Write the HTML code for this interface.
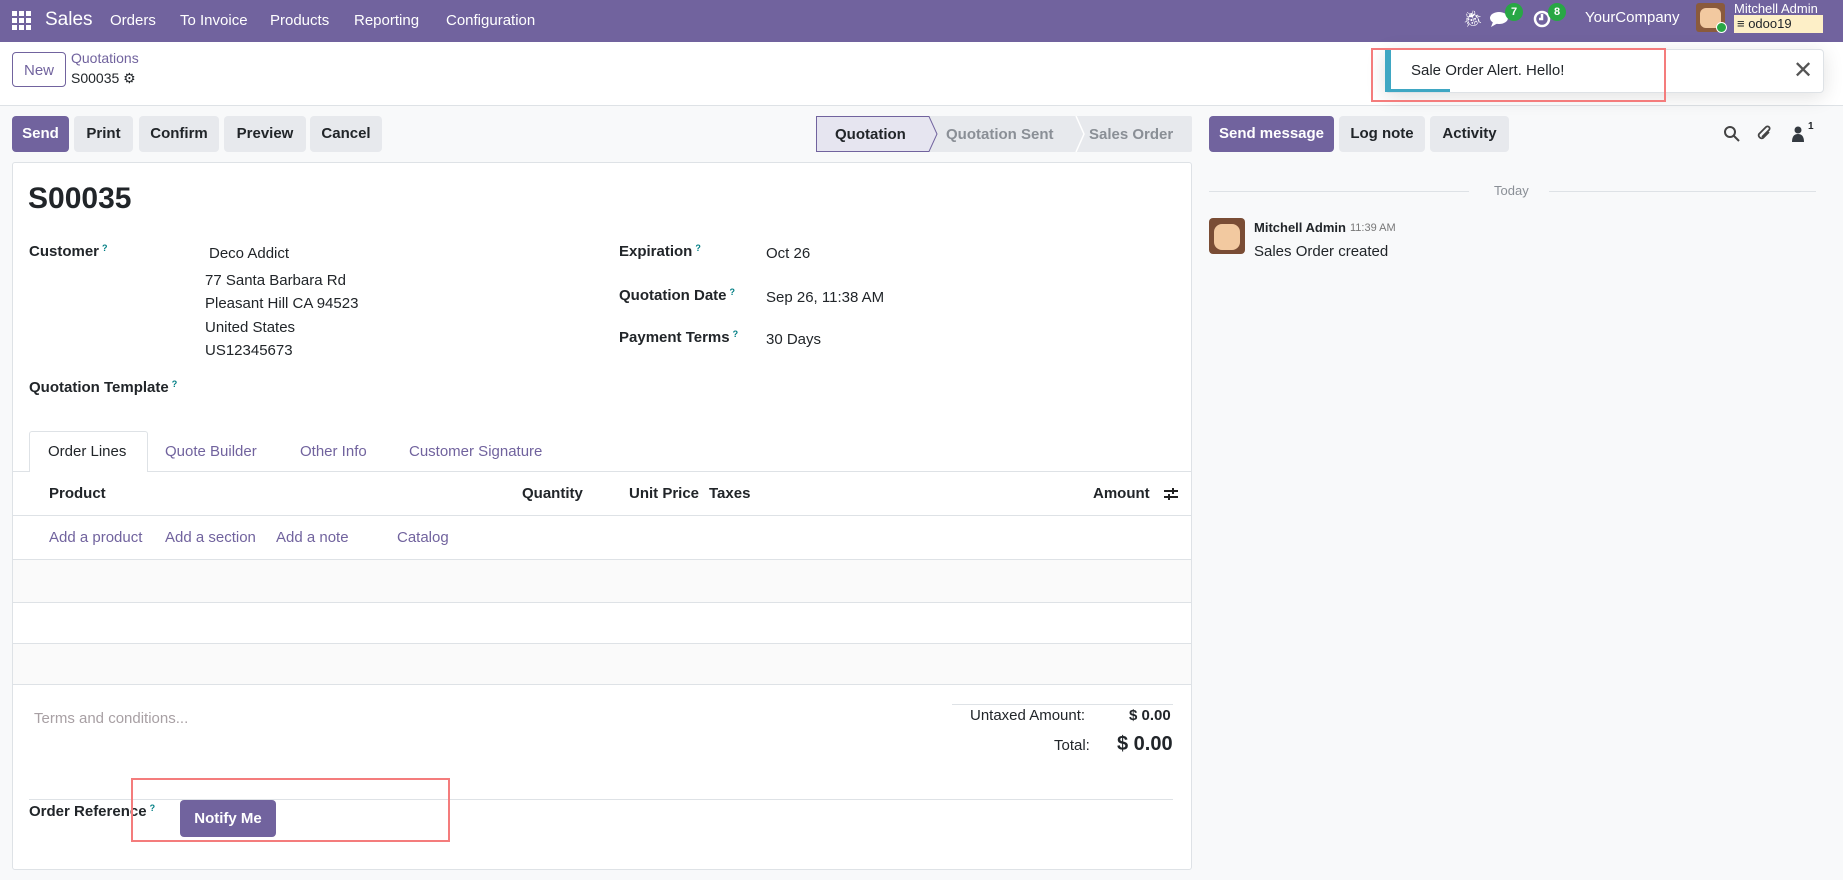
<!DOCTYPE html>
<html><head><meta charset="utf-8"><style>
*{box-sizing:border-box;margin:0;padding:0}
body{width:1843px;height:880px;overflow:hidden;background:#f8f9fa;font-family:"Liberation Sans",sans-serif;font-size:15px;color:#212529;position:relative}
.a{position:absolute;white-space:nowrap}
.nav{position:absolute;left:0;top:0;width:1843px;height:42px;background:#71639e;color:#fff}
.nav .a{font-size:15px;top:12px;color:#fff}
.cp{position:absolute;left:0;top:42px;width:1843px;height:64px;background:#fff;border-bottom:1px solid #dee2e6}
.btn{position:absolute;height:36px;line-height:36px;text-align:center;border-radius:4px;font-weight:bold;font-size:15px;background:#e7e9ed;color:#212529}
.pri{background:#71639e;color:#fff}
.sheet{position:absolute;left:12px;top:162px;width:1180px;height:708px;background:#fff;border:1px solid #dee2e6;border-radius:3px}
.lbl{font-weight:bold}
.q{color:#017e84;font-size:9px;vertical-align:top;font-weight:bold;margin-left:3px}
.lnk{color:#71639e}
.badge{position:absolute;width:18px;height:18px;border-radius:9px;background:#28a745;color:#fff;font-size:11px;font-weight:bold;text-align:center;line-height:18px}
</style></head><body>
<div class="nav">
 <svg class="a" style="left:12px;top:11px" width="20" height="20" viewBox="0 0 20 20" fill="#fff"><rect x="0" y="0" width="5" height="5"/><rect x="7" y="0" width="5" height="5"/><rect x="14" y="0" width="5" height="5"/><rect x="0" y="7" width="5" height="5"/><rect x="7" y="7" width="5" height="5"/><rect x="14" y="7" width="5" height="5"/><rect x="0" y="14" width="5" height="5"/><rect x="7" y="14" width="5" height="5"/><rect x="14" y="14" width="5" height="5"/></svg>
 <span class="a" style="left:45px;top:9px;font-size:19px">Sales</span>
 <span class="a" style="left:110px">Orders</span>
 <span class="a" style="left:180px">To Invoice</span>
 <span class="a" style="left:270px">Products</span>
 <span class="a" style="left:354px">Reporting</span>
 <span class="a" style="left:446px">Configuration</span>
 <span class="a" style="left:1463px;top:9px;font-size:16px">🐞︎</span>
 <svg class="a" style="left:1490px;top:10px" width="22" height="20" viewBox="0 0 22 20" fill="#fff"><ellipse cx="9" cy="8" rx="9" ry="6"/><path d="M3 12 L1 17 L8 13Z"/></svg>
 <div class="badge" style="left:1505px;top:3px">7</div>
 <svg class="a" style="left:1532px;top:9px" width="20" height="20" viewBox="0 0 20 20" fill="none" stroke="#fff" stroke-width="2.5"><circle cx="10" cy="10" r="7"/><path d="M10 5v5h-3"/></svg>
 <div class="badge" style="left:1548px;top:3px">8</div>
 <span class="a" style="left:1585px;top:9px;font-size:15px">YourCompany</span>
 <div class="a" style="left:1696px;top:3px;width:29px;height:29px;background:#8a5a3c;border-radius:3px"></div>
 <div class="a" style="left:1700px;top:8px;width:21px;height:20px;background:#f2c9a0;border-radius:6px"></div>
 <div class="a" style="left:1716px;top:22px;width:11px;height:11px;background:#28a745;border-radius:6px;border:1px solid #fff"></div>
 <span class="a" style="left:1734px;top:1px;font-size:13px">Mitchell Admin</span>
 <div class="a" style="left:1734px;top:15px;width:89px;height:18px;background:#fdefc7;color:#212529;font-size:13px;padding-left:3px;line-height:18px">≡ odoo19</div>
</div>
<div class="cp">
 <div class="btn" style="left:12px;top:10px;width:54px;height:35px;background:#fff;border:1px solid #71639e;color:#71639e;font-weight:normal">New</div>
 <span class="a lnk" style="left:71px;top:8px;font-size:14px">Quotations</span>
 <span class="a" style="left:71px;top:28px;font-size:14px">S00035 ⚙</span>
</div>
<div class="a" style="left:1385px;top:49px;width:439px;height:44px;background:#fff;border:1px solid #dee2e6;border-radius:4px;box-shadow:0 4px 20px rgba(0,0,0,.12)"></div>
<div class="a" style="left:1385px;top:49px;width:6px;height:43px;background:#3fa7c3"></div>
<div class="a" style="left:1385px;top:89px;width:65px;height:3px;background:#3fa7c3"></div>
<span class="a" style="left:1411px;top:62px;font-size:15px">Sale Order Alert. Hello!</span>
<span class="a" style="left:1793px;top:56px;font-size:24px;color:#555">✕</span>
<div class="a" style="left:1371px;top:48px;width:295px;height:54px;border:2px solid #f47c7c"></div>

<div class="btn pri" style="left:12px;top:116px;width:57px">Send</div>
<div class="btn" style="left:74px;top:116px;width:59px">Print</div>
<div class="btn" style="left:139px;top:116px;width:80px">Confirm</div>
<div class="btn" style="left:224px;top:116px;width:82px">Preview</div>
<div class="btn" style="left:310px;top:116px;width:72px">Cancel</div>
<svg class="a" style="left:816px;top:116px" width="376" height="36" viewBox="0 0 376 36">
 <rect x="0" y="0" width="376" height="36" rx="2" fill="#e7e9ed"/>
 <path d="M0.5 0.5 H113 L121 18 L113 35.5 H0.5Z" fill="#e6e5f0" stroke="#71639e"/>
 <path d="M260 0 L268 18 L260 36" fill="none" stroke="#fff" stroke-width="1.5"/>
 <text x="19" y="23" font-family="Liberation Sans" font-size="15" font-weight="bold" fill="#212529">Quotation</text>
 <text x="130" y="23" font-family="Liberation Sans" font-size="15" font-weight="bold" fill="#8a8f96">Quotation Sent</text>
 <text x="273" y="23" font-family="Liberation Sans" font-size="15" font-weight="bold" fill="#8a8f96">Sales Order</text>
</svg>

<div class="btn pri" style="left:1209px;top:116px;width:125px">Send message</div>
<div class="btn" style="left:1339px;top:116px;width:86px">Log note</div>
<div class="btn" style="left:1430px;top:116px;width:79px">Activity</div>
<svg class="a" style="left:1723px;top:125px" width="18" height="18" viewBox="0 0 18 18" fill="none" stroke="#444" stroke-width="2"><circle cx="7" cy="7" r="5"/><path d="M11 11l5 5"/></svg>
<svg class="a" style="left:1756px;top:124px" width="18" height="20" viewBox="0 0 18 20" fill="none" stroke="#444" stroke-width="1.8"><path d="M13 8 L7 14 a3 3 0 0 1-4-4 L10 3 a2 2 0 0 1 3 3 L6 13"/></svg>
<svg class="a" style="left:1792px;top:126px" width="12" height="16" viewBox="0 0 12 16" fill="#343a40"><circle cx="6" cy="4" r="3.5"/><path d="M0 16 Q0 8 6 8 Q12 8 12 16Z"/></svg>
<span class="a" style="left:1808px;top:121px;font-size:10px;font-weight:bold">1</span>
<div class="a" style="left:1209px;top:191px;width:260px;border-top:1px solid #dee2e6"></div>
<span class="a" style="left:1494px;top:183px;font-size:13px;color:#8a8f96">Today</span>
<div class="a" style="left:1549px;top:191px;width:267px;border-top:1px solid #dee2e6"></div>
<div class="a" style="left:1209px;top:218px;width:36px;height:36px;background:#7a4d35;border-radius:4px"></div>
<div class="a" style="left:1214px;top:224px;width:26px;height:26px;background:#f2c9a0;border-radius:8px"></div>
<span class="a" style="left:1254px;top:220px;font-size:13px;font-weight:bold">Mitchell Admin</span>
<span class="a" style="left:1350px;top:222px;font-size:11px;color:#777">11:39 AM</span>
<span class="a" style="left:1254px;top:243px;font-size:15px">Sales Order created</span>

<div class="sheet"></div>
<span class="a" style="left:28px;top:182px;font-size:30px;font-weight:bold">S00035</span>
<span class="a lbl" style="left:29px;top:243px">Customer<span class="q">?</span></span>
<span class="a" style="left:209px;top:245px">Deco Addict</span>
<span class="a" style="left:205px;top:272px">77 Santa Barbara Rd</span>
<span class="a" style="left:205px;top:295px">Pleasant Hill CA 94523</span>
<span class="a" style="left:205px;top:319px">United States</span>
<span class="a" style="left:205px;top:342px">US12345673</span>
<span class="a lbl" style="left:29px;top:379px">Quotation Template<span class="q">?</span></span>
<span class="a lbl" style="left:619px;top:243px">Expiration<span class="q">?</span></span>
<span class="a" style="left:766px;top:245px">Oct 26</span>
<span class="a lbl" style="left:619px;top:287px">Quotation Date<span class="q">?</span></span>
<span class="a" style="left:766px;top:289px">Sep 26, 11:38 AM</span>
<span class="a lbl" style="left:619px;top:329px">Payment Terms<span class="q">?</span></span>
<span class="a" style="left:766px;top:331px">30 Days</span>

<div class="a" style="left:13px;top:471px;width:1178px;border-top:1px solid #dee2e6"></div>
<div class="a" style="left:29px;top:431px;width:119px;height:41px;background:#fff;border:1px solid #dee2e6;border-bottom:none;border-radius:3px 3px 0 0"></div>
<span class="a" style="left:48px;top:443px">Order Lines</span>
<span class="a lnk" style="left:165px;top:443px">Quote Builder</span>
<span class="a lnk" style="left:300px;top:443px">Other Info</span>
<span class="a lnk" style="left:409px;top:443px">Customer Signature</span>
<span class="a lbl" style="left:49px;top:485px">Product</span>
<span class="a lbl" style="left:522px;top:485px">Quantity</span>
<span class="a lbl" style="left:629px;top:485px">Unit Price</span>
<span class="a lbl" style="left:709px;top:485px">Taxes</span>
<span class="a lbl" style="left:1093px;top:485px">Amount</span>
<svg class="a" style="left:1163px;top:486px" width="16" height="16" viewBox="0 0 16 16" stroke="#222" stroke-width="2"><path d="M1 5h14M1 11h14"/><path d="M10 2v6M6 8v6"/></svg>
<div class="a" style="left:13px;top:515px;width:1178px;border-top:1px solid #dee2e6"></div>
<span class="a lnk" style="left:49px;top:529px">Add a product</span>
<span class="a lnk" style="left:165px;top:529px">Add a section</span>
<span class="a lnk" style="left:276px;top:529px">Add a note</span>
<span class="a lnk" style="left:397px;top:529px">Catalog</span>
<div class="a" style="left:13px;top:559px;width:1178px;height:43px;background:#fafafa;border-top:1px solid #dee2e6"></div>
<div class="a" style="left:13px;top:602px;width:1178px;height:41px;border-top:1px solid #dee2e6"></div>
<div class="a" style="left:13px;top:643px;width:1178px;height:42px;background:#fafafa;border-top:1px solid #dee2e6;border-bottom:1px solid #dee2e6"></div>
<span class="a" style="left:34px;top:710px;color:#a8a0a4">Terms and conditions...</span>
<div class="a" style="left:952px;top:704px;width:221px;border-top:1px solid #dee2e6"></div>
<span class="a" style="left:970px;top:707px">Untaxed Amount:</span>
<span class="a lbl" style="left:1129px;top:707px">$ 0.00</span>
<span class="a" style="left:1054px;top:737px">Total:</span>
<span class="a lbl" style="left:1117px;top:733px;font-size:20px">$ 0.00</span>
<div class="a" style="left:29px;top:799px;width:1144px;border-top:1px solid #dee2e6"></div>
<span class="a lbl" style="left:29px;top:803px">Order Reference<span class="q">?</span></span>
<div class="btn pri" style="left:180px;top:800px;width:96px;height:37px;line-height:37px">Notify Me</div>
<div class="a" style="left:131px;top:778px;width:319px;height:64px;border:2px solid #f47c7c"></div>
</body></html>
